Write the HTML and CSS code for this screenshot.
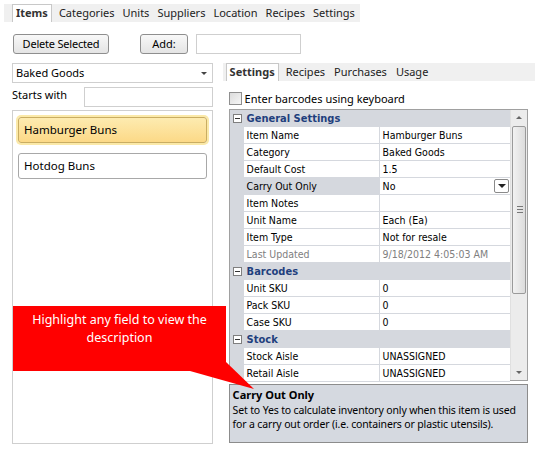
FILE: index.html
```html
<!DOCTYPE html>
<html>
<head>
<meta charset="utf-8">
<title>Items</title>
<link rel="stylesheet" href="styles.css">
</head>
<body>
<div class="toptabs">
	<div class="tab active">Items</div>
	<div class="tab">Categories</div>
	<div class="tab">Units</div>
	<div class="tab">Suppliers</div>
	<div class="tab">Location</div>
	<div class="tab">Recipes</div>
	<div class="tab">Settings</div>
</div>
<div class="toolbar">
	<div class="but del">Delete Selected</div>
	<div class="but add">Add:</div>
	<div class="txt addtxt"></div>
</div>
<div class="main">
	<div class="leftcol">
		<div class="combo">Baked Goods<span class="arrow"></span></div>
		<div class="filter">
			<span class="lbl">Starts with</span>
			<div class="txt filtertxt"></div>
		</div>
		<div class="list">
			<div class="item sel">Hamburger Buns</div>
			<div class="item">Hotdog Buns</div>
		</div>
	</div>
	<div class="rightcol">
		<div class="subtabs">
			<div class="tab active">Settings</div>
			<div class="tab">Recipes</div>
			<div class="tab">Purchases</div>
			<div class="tab">Usage</div>
		</div>
		<label class="check"><span class="box"></span>Enter barcodes using keyboard</label>
		<div class="grid">
			<div class="rows">
				<div class="cat"><span class="minus"></span>General Settings</div>
				<div class="row"><span class="gut"></span><span class="name">Item Name</span><span class="val">Hamburger Buns</span></div>
				<div class="row"><span class="gut"></span><span class="name">Category</span><span class="val">Baked Goods</span></div>
				<div class="row"><span class="gut"></span><span class="name">Default Cost</span><span class="val">1.5</span></div>
				<div class="row cur"><span class="gut"></span><span class="name">Carry Out Only</span><span class="val">No<span class="drop"></span></span></div>
				<div class="row"><span class="gut"></span><span class="name">Item Notes</span><span class="val"></span></div>
				<div class="row"><span class="gut"></span><span class="name">Unit Name</span><span class="val">Each (Ea)</span></div>
				<div class="row"><span class="gut"></span><span class="name">Item Type</span><span class="val">Not for resale</span></div>
				<div class="row ro"><span class="gut"></span><span class="name">Last Updated</span><span class="val">9/18/2012 4:05:03 AM</span></div>
				<div class="cat"><span class="minus"></span>Barcodes</div>
				<div class="row"><span class="gut"></span><span class="name">Unit SKU</span><span class="val">0</span></div>
				<div class="row"><span class="gut"></span><span class="name">Pack SKU</span><span class="val">0</span></div>
				<div class="row"><span class="gut"></span><span class="name">Case SKU</span><span class="val">0</span></div>
				<div class="cat"><span class="minus"></span>Stock</div>
				<div class="row"><span class="gut"></span><span class="name">Stock Aisle</span><span class="val">UNASSIGNED</span></div>
				<div class="row"><span class="gut"></span><span class="name">Retail Aisle</span><span class="val">UNASSIGNED</span></div>
			</div>
			<div class="scroll">
				<div class="sarrow up"></div>
				<div class="thumb"><span class="grip"></span></div>
				<div class="sarrow down"></div>
			</div>
		</div>
		<div class="desc">
			<div class="desctitle">Carry Out Only</div>
			<div class="desctext">Set to Yes to calculate inventory only when this item is used for a carry out order (i.e. containers or plastic utensils).</div>
		</div>
	</div>
</div>
<div class="callout">Highlight any field to view the description</div>
<svg class="pointer" width="75" height="40" viewBox="0 0 75 40"><polygon points="5,16 41,7 69,34" fill="#ff0000"/></svg>
</body>
</html>
```
FILE: styles.css
```css
body {
	margin: 0;
	font-family: "Noto Sans", sans-serif;
	font-size: 11px;
	color: #000;
	background: #fff;
	position: relative;
	width: 535px;
	height: 453px;
	overflow: hidden;
}
.toptabs, .subtabs {
	display: flex;
	background: #f0f0f0;
	height: 18px;
	align-items: flex-end;
}
.toptabs {
	margin: 4px 0 0 4px;
	width: 356px;
	padding-left: 8px;
	box-sizing: border-box;
}
.tab {
	padding: 0 3px;
	margin-right: 2px;
	height: 17px;
	line-height: 16px;
	color: #222;
}
.tab.active {
	background: #fff;
	border: solid #c8c8c8 1px;
	border-bottom: none;
	font-weight: bold;
	padding: 0 3px;
	margin-right: 4px;
	color: #333;
}
.subtabs .tab {
	margin-right: 3px;
}
.subtabs .tab.active {
	margin-right: 4px;
}
.toolbar {
	display: flex;
	margin: 12px 0 0 13px;
	height: 20px;
}
.but {
	box-sizing: border-box;
	height: 20px;
	line-height: 18px;
	border: solid #8e8e8e 1px;
	border-radius: 3px;
	background: linear-gradient(#f8f8f8, #e4e4e4);
	text-align: center;
}
.del {
	width: 96px;
	letter-spacing: -0.2px;
}
.add {
	width: 48px;
	margin-left: 31px;
}
.txt {
	box-sizing: border-box;
	border: solid #cfcfcf 1px;
	background: #fff;
	height: 20px;
}
.addtxt {
	width: 105px;
	margin-left: 8px;
}
.main {
	display: flex;
	margin-top: 9px;
}
.leftcol {
	margin-left: 12px;
	width: 201px;
	display: flex;
	flex-direction: column;
}
.combo {
	box-sizing: border-box;
	height: 20px;
	line-height: 18px;
	border: solid #cfcfcf 1px;
	padding-left: 3px;
	position: relative;
}
.combo .arrow {
	position: absolute;
	right: 5px;
	top: 8px;
	border-left: 3px solid transparent;
	border-right: 3px solid transparent;
	border-top: 3px solid #444;
}
.filter {
	display: flex;
	margin-top: 4px;
	height: 20px;
}
.filter .lbl {
	width: 72px;
	line-height: 15px;
}
.filtertxt {
	flex: 1;
}
.list {
	box-sizing: border-box;
	margin-top: 3px;
	height: 334px;
	border: solid #cfcfcf 1px;
	padding: 6px 5px;
}
.item {
	box-sizing: border-box;
	height: 26px;
	line-height: 24px;
	border: solid #a8a8a8 1px;
	border-radius: 3px;
	padding-left: 5px;
	font-size: 11.5px;
	margin-bottom: 10px;
	background: #fff;
}
.item.sel {
	background: linear-gradient(#fdebb0, #fcd987);
	border-color: #c9ad63;
	box-shadow: 0 0 0 2px #fbe9a8;
}
.rightcol {
	margin-left: 10px;
	width: 313px;
}
.subtabs {
	padding-left: 3px;
}
.check {
	display: flex;
	align-items: center;
	margin: 9px 0 0 6px;
	height: 16px;
}
.check .box {
	box-sizing: border-box;
	width: 13px;
	height: 13px;
	border: solid #8f8f8f 1px;
	background: linear-gradient(135deg, #dcdcdc, #f6f6f6);
	margin-right: 3px;
}
.grid {
	display: flex;
	margin: 3px 0 0 6px;
	width: 299px;
	height: 272px;
	box-sizing: border-box;
	border: solid #a0a0a0 1px;
	font-family: "DejaVu Sans Condensed", "DejaVu Sans", sans-serif;
	font-size: 10.5px;
}
.rows {
	flex: 1;
	background: #d5d8de;
}
.cat, .row {
	display: flex;
	height: 17px;
	line-height: 16px;
	box-sizing: border-box;
}
.cat {
	color: #1f3f7d;
	font-weight: bold;
	font-size: 11px;
	align-items: center;
}
.minus {
	box-sizing: border-box;
	width: 9px;
	height: 9px;
	border: solid #7f7f7f 1px;
	background: #fff;
	margin: 0 5px 0 3px;
	position: relative;
}
.minus:after {
	content: '';
	position: absolute;
	left: 1px;
	right: 1px;
	top: 3px;
	height: 1px;
	background: #333;
}
.gut {
	width: 14px;
}
.name, .val {
	background: #fff;
	border-bottom: solid #d5d8de 1px;
	padding-left: 3px;
	box-sizing: border-box;
	white-space: nowrap;
	overflow: hidden;
}
.name {
	width: 136px;
	border-right: solid #d5d8de 1px;
}
.val {
	flex: 1;
	position: relative;
}
.row.cur .name {
	background: #d5d8de;
}
.row.ro {
	color: #808080;
}
.drop {
	position: absolute;
	right: 1px;
	top: 1px;
	width: 15px;
	height: 14px;
	box-sizing: border-box;
	border: solid #8a8a8a 1px;
	border-radius: 2px;
	background: #fff;
}
.drop:after {
	content: '';
	position: absolute;
	left: 3px;
	top: 4px;
	border-left: 4px solid transparent;
	border-right: 4px solid transparent;
	border-top: 4px solid #222;
}
.scroll {
	width: 16px;
	background: #ececec;
	border-left: solid #e0e0e0 1px;
	display: flex;
	flex-direction: column;
}
.sarrow {
	height: 16px;
	position: relative;
}
.sarrow:after {
	content: '';
	position: absolute;
	left: 5px;
	border-left: 3px solid transparent;
	border-right: 3px solid transparent;
}
.up:after {
	top: 6px;
	border-bottom: 3px solid #666;
}
.down {
	margin-top: auto;
}
.down:after {
	top: 7px;
	border-top: 3px solid #666;
}
.thumb {
	box-sizing: border-box;
	margin: 0 1px;
	height: 168px;
	border: solid #9a9a9a 1px;
	border-radius: 2px;
	background: linear-gradient(90deg, #f2f2f2, #dcdcdc);
	position: relative;
}
.grip {
	position: absolute;
	left: 4px;
	top: 79px;
	width: 6px;
	height: 5px;
	border-top: solid #777 1px;
	border-bottom: solid #777 1px;
}
.grip:after {
	content: '';
	position: absolute;
	left: 0;
	right: 0;
	top: 2px;
	height: 1px;
	background: #777;
}
.desc {
	box-sizing: border-box;
	margin: 3px 0 0 6px;
	width: 299px;
	height: 59px;
	border: solid #8c8c8c 1px;
	background: #d5d9e0;
	padding: 3px 3px;
	font-size: 10.5px;
	line-height: 14px;
	letter-spacing: -0.15px;
}
.desctitle {
	font-weight: bold;
	font-size: 11px;
	margin-bottom: 1px;
	letter-spacing: 0;
}
.callout {
	position: absolute;
	left: 13px;
	top: 306px;
	width: 213px;
	height: 65px;
	box-sizing: border-box;
	background: #ff0000;
	color: #fff;
	text-align: center;
	font-size: 12.5px;
	line-height: 18px;
	padding: 5px 10px 0;
}
.pointer {
	position: absolute;
	left: 185px;
	top: 355px;
}
```
